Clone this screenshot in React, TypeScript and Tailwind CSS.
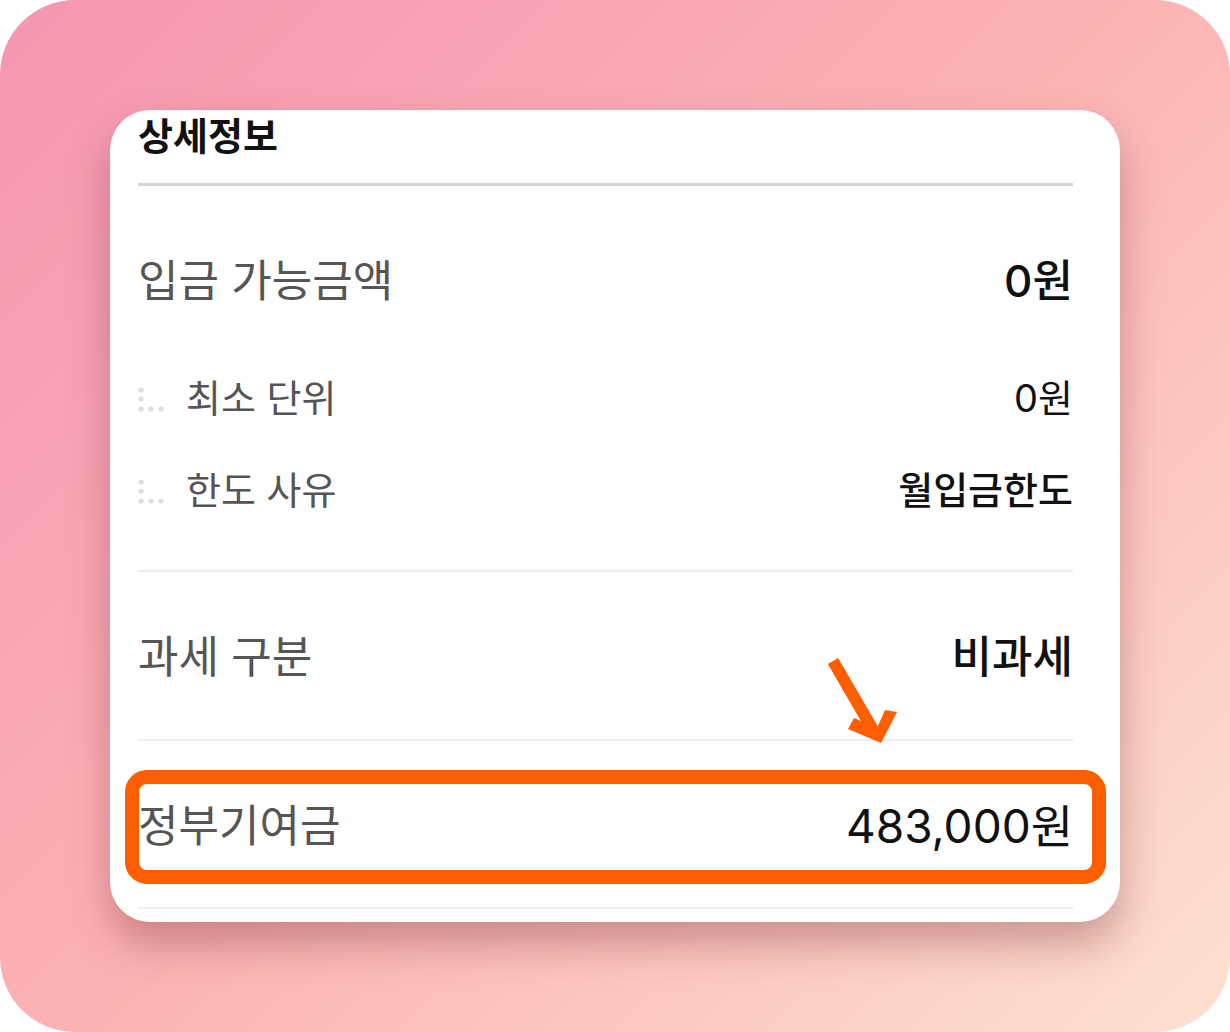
import React from 'react'

// ── Small pieces ──────────────────────────────────────────────────────────────

function TreeDots() {
  return (
    <svg width="30" height="30" viewBox="0 0 30 30" className="shrink-0">
      <circle cx="3" cy="4" r="2.6" fill="#dedede" />
      <circle cx="3" cy="13" r="2.6" fill="#dedede" />
      <circle cx="3" cy="23" r="2.6" fill="#dedede" />
      <circle cx="13" cy="23" r="2.6" fill="#dedede" />
      <circle cx="23" cy="23" r="2.6" fill="#dedede" />
    </svg>
  )
}

function Row({ label, value, strong, big }: { label: string; value: string; strong?: boolean; big?: boolean }) {
  return (
    <div className="flex h-[60px] items-center justify-between">
      <span className="text-[44px] leading-none text-[#555555]">{label}</span>
      <span
        className={`leading-none text-[#111111] ${big ? 'text-[46px]' : 'text-[44px]'} ${strong ? 'font-medium' : 'font-normal'}`}
      >
        {value}
      </span>
    </div>
  )
}

function SubRow({ label, value, strong }: { label: string; value: string; strong?: boolean }) {
  return (
    <div className="flex h-[50px] items-center justify-between">
      <div className="flex items-center">
        <div className="w-[48px] pt-[6px]">
          <TreeDots />
        </div>
        <span className="text-[38px] leading-none text-[#555555]">{label}</span>
      </div>
      <span className={`text-[38px] leading-none text-[#111111] ${strong ? 'font-medium' : 'font-normal'}`}>
        {value}
      </span>
    </div>
  )
}

// ── Page ──────────────────────────────────────────────────────────────────────

export default function App() {
  return (
    <div className="h-[1032px] w-[1230px] bg-white" style={{ fontFamily: 'Inter, "Noto Sans CJK KR", "Noto Sans", sans-serif' }}>
      <div className="h-[1032px] w-[1230px] overflow-hidden rounded-[75px] bg-[linear-gradient(135deg,#f596b0_0%,#fcb3b4_50%,#fde1d1_100%)] pl-[110px] pt-[110px]">
        <div className="relative h-[812px] w-[1010px] rounded-[40px] bg-white pl-[28px] pr-[47px] shadow-[0_22px_40px_rgba(130,50,60,0.38)]">
          <div className="h-[73px]">
            <h2 className="text-[38px] font-bold leading-[52px] text-[#111111]">상세정보</h2>
          </div>
          <div className="h-[3px] bg-[#d6d6d6]" />

          <div className="pb-[55px] pt-[65px]">
            <Row label="입금 가능금액" value="0원" strong />
            <div className="mt-[62px]">
              <SubRow label="최소 단위" value="0원" />
            </div>
            <div className="mt-[42px]">
              <SubRow label="한도 사유" value="월입금한도" strong />
            </div>
          </div>
          <div className="h-[2px] bg-[#eeeeee]" />

          <div className="pb-[52px] pt-[55px]">
            <Row label="과세 구분" value="비과세" strong />
          </div>
          <div className="h-[2px] bg-[#eeeeee]" />

          <div className="pb-[51px] pt-[55px]">
            <Row label="정부기여금" value="483,000원" big />
          </div>
          <div className="h-[2px] bg-[#eeeeee]" />

          {/* highlight box */}
          <div className="absolute left-[15px] top-[660px] h-[114px] w-[981px] rounded-[22px] border-[14px] border-[#ff5e00]" />

          {/* arrow */}
          <svg className="absolute left-[700px] top-[530px]" width="200" height="120" viewBox="700 530 200 120">
            <line x1="723" y1="551" x2="763" y2="620" stroke="#ff5e00" strokeWidth="12" />
            <polygon points="771,633 738,619 744,608 767,618 775,600 787,602" fill="#ff5e00" />
          </svg>
        </div>
      </div>
    </div>
  )
}
